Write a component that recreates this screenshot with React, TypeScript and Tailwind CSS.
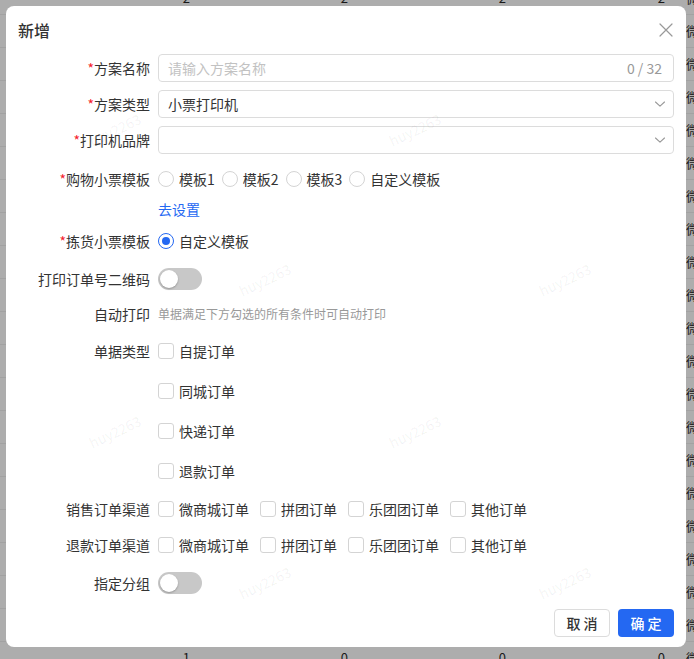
import React from "react";

const font = "font-['Noto_Sans_CJK_SC','Noto_Sans',sans-serif]";

function Label({ text, required }: { text: string; required?: boolean }) {
  return (
    <div className="w-[152px] shrink-0 pr-2 text-right text-[14px] leading-[20px] text-[#333]">
      {required && <span className="text-[#f5222d]">*</span>}
      {text}
    </div>
  );
}

function Row({
  label,
  required,
  children,
  className = "",
}: {
  label?: string;
  required?: boolean;
  children?: React.ReactNode;
  className?: string;
}) {
  return (
    <div className={`flex h-[28px] items-center ${className}`}>
      <Label text={label ?? ""} required={required} />
      <div className="flex min-w-0 flex-1 items-center pr-3">{children}</div>
    </div>
  );
}

function Radio({ label, checked }: { label: string; checked?: boolean }) {
  return (
    <div className="mr-[7px] flex items-center">
      {checked ? (
        <span className="flex h-4 w-4 items-center justify-center rounded-full border border-[#2468f2] bg-white">
          <span className="h-[8px] w-[8px] rounded-full bg-[#2468f2]" />
        </span>
      ) : (
        <span className="h-4 w-4 rounded-full border border-[#d4d4d4] bg-white" />
      )}
      <span className="ml-[5px] text-[14px] leading-[20px] text-[#333]">{label}</span>
    </div>
  );
}

function Checkbox({ label }: { label: string }) {
  return (
    <div className="mr-[11px] flex items-center">
      <span className="h-4 w-4 rounded-[3px] border border-[#d4d4d4] bg-white" />
      <span className="ml-[5px] text-[14px] leading-[20px] text-[#333]">{label}</span>
    </div>
  );
}

function Toggle() {
  return (
    <span className="flex h-[22px] w-[44px] items-center rounded-full bg-[#c8c8c8] p-[2px]">
      <span className="h-[18px] w-[18px] rounded-full bg-white shadow-[0_1px_2px_rgba(0,0,0,0.25)]" />
    </span>
  );
}

function Chevron() {
  return (
    <svg width="12" height="12" viewBox="0 0 12 12" fill="none">
      <path d="M1.5 4 L6 8.2 L10.5 4" stroke="#999" strokeWidth="1.1" strokeLinecap="round" strokeLinejoin="round" />
    </svg>
  );
}

function Select({ value }: { value?: string }) {
  return (
    <div className="flex h-[28px] flex-1 items-center justify-between rounded-[4px] border border-[#dcdcdc] pl-[9px] pr-[7px]">
      <span className="text-[14px] leading-[20px] text-[#333]">{value ?? ""}</span>
      <Chevron />
    </div>
  );
}

const bgRows: string[][] = [
  ["2", "2", "2", "2"],
  ...Array.from({ length: 19 }, () => ["", "", "", ""]),
  ["1", "0", "0", "0"],
];

export default function App() {
  return (
    <div className={`relative h-[659px] w-[694px] overflow-hidden bg-[#adadad] ${font}`}>
      {/* background table behind the mask */}
      <div className="-mt-[18px] flex flex-col">
        {bgRows.map((r, i) => (
          <div key={i} className="flex h-[33px] shrink-0 items-center border-b border-[#a2a2a2] text-[13px] text-[#1a1a1a]">
            <div className="w-[190px] shrink-0 text-right">{r[0]}</div>
            <div className="w-[158px] shrink-0 text-right">{r[1]}</div>
            <div className="w-[158px] shrink-0 text-right">{r[2]}</div>
            <div className="w-[159px] shrink-0 text-right">{r[3]}</div>
            <div className="shrink-0 whitespace-nowrap pl-[21px]">微信</div>
          </div>
        ))}
      </div>

      {/* mask + modal */}
      <div className="absolute inset-0 pl-[6px] pt-[6px]">
        <div className="relative flex h-[641px] w-[680px] flex-col overflow-hidden rounded-[8px] bg-white">
          <div className="flex h-[48px] shrink-0 items-center justify-between pl-3 pr-[12px]">
            <span className="text-[16px] font-medium leading-[22px] text-[#333]">新增</span>
            <svg width="14" height="14" viewBox="0 0 14 14" fill="none" className="mr-[1px]">
              <path d="M1 1 L13 13 M13 1 L1 13" stroke="#999" strokeWidth="1.2" strokeLinecap="round" />
            </svg>
          </div>

          <Row label="方案名称" required>
            <div className="flex h-[28px] flex-1 items-center justify-between rounded-[4px] border border-[#dcdcdc] px-[9px] pr-[11px]">
              <span className="text-[14px] leading-[20px] text-[#c2c2c2]">请输入方案名称</span>
              <span className="text-[14px] leading-[20px] text-[#999]">0 / 32</span>
            </div>
          </Row>
          <Row label="方案类型" required className="mt-[8px]">
            <Select value="小票打印机" />
          </Row>
          <Row label="打印机品牌" required className="mt-[8px]">
            <Select />
          </Row>
          <Row label="购物小票模板" required className="mt-[11px]">
            <Radio label="模板1" />
            <Radio label="模板2" />
            <Radio label="模板3" />
            <Radio label="自定义模板" />
          </Row>
          <Row className="mt-[2px]">
            <span className="text-[14px] leading-[20px] text-[#2468f2]">去设置</span>
          </Row>
          <Row label="拣货小票模板" required className="mt-[4px]">
            <Radio label="自定义模板" checked />
          </Row>
          <Row label="打印订单号二维码" className="mt-[10px]">
            <Toggle />
          </Row>
          <Row label="自动打印" className="mt-[7px]">
            <span className="text-[12px] leading-[18px] text-[#999]">单据满足下方勾选的所有条件时可自动打印</span>
          </Row>
          <Row label="单据类型" className="mt-[9px]">
            <Checkbox label="自提订单" />
          </Row>
          <Row className="mt-[12px]">
            <Checkbox label="同城订单" />
          </Row>
          <Row className="mt-[12px]">
            <Checkbox label="快递订单" />
          </Row>
          <Row className="mt-[12px]">
            <Checkbox label="退款订单" />
          </Row>
          <Row label="销售订单渠道" className="mt-[10px]">
            <Checkbox label="微商城订单" />
            <Checkbox label="拼团订单" />
            <Checkbox label="乐团团订单" />
            <Checkbox label="其他订单" />
          </Row>
          <Row label="退款订单渠道" className="mt-[8px]">
            <Checkbox label="微商城订单" />
            <Checkbox label="拼团订单" />
            <Checkbox label="乐团团订单" />
            <Checkbox label="其他订单" />
          </Row>
          <Row label="指定分组" className="mt-[10px]">
            <Toggle />
          </Row>

          <div className="mt-[12px] flex justify-end gap-2 pr-3">
            <button className="flex h-[28px] w-[56px] items-center justify-center rounded-[4px] border border-[#dcdcdc] bg-white text-[14px] font-medium text-[#333]">
              取 消
            </button>
            <button className="flex h-[28px] w-[56px] items-center justify-center rounded-[4px] bg-[#2468f2] text-[14px] font-medium text-white">
              确 定
            </button>
          </div>

          {/* watermark */}
          <div className="pointer-events-none absolute inset-0 select-none text-[14px] text-[rgba(0,0,0,0.06)]">
            <span className="absolute left-[109px] top-[124px] -translate-x-1/2 -translate-y-1/2 -rotate-[25deg]">huy2263</span>
            <span className="absolute left-[409px] top-[124px] -translate-x-1/2 -translate-y-1/2 -rotate-[25deg]">huy2263</span>
            <span className="absolute left-[259px] top-[274px] -translate-x-1/2 -translate-y-1/2 -rotate-[25deg]">huy2263</span>
            <span className="absolute left-[559px] top-[274px] -translate-x-1/2 -translate-y-1/2 -rotate-[25deg]">huy2263</span>
            <span className="absolute left-[109px] top-[426px] -translate-x-1/2 -translate-y-1/2 -rotate-[25deg]">huy2263</span>
            <span className="absolute left-[409px] top-[426px] -translate-x-1/2 -translate-y-1/2 -rotate-[25deg]">huy2263</span>
            <span className="absolute left-[259px] top-[577px] -translate-x-1/2 -translate-y-1/2 -rotate-[25deg]">huy2263</span>
            <span className="absolute left-[559px] top-[577px] -translate-x-1/2 -translate-y-1/2 -rotate-[25deg]">huy2263</span>
          </div>
        </div>
      </div>
    </div>
  );
}
